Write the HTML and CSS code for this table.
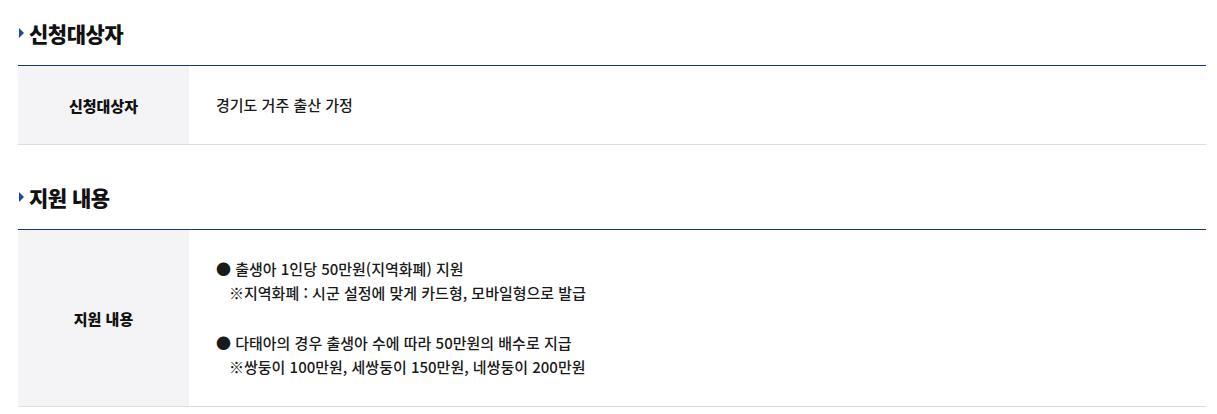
FILE: index.html
```html
<!DOCTYPE html>
<html lang="ko">
<head>
<meta charset="utf-8">
<link rel="stylesheet" href="styles.css">
</head>
<body>
<div class="page">
  <section class="sec">
    <h3 class="sec-title"><span class="tri"></span>신청대상자</h3>
    <div class="row">
      <div class="label">신청대상자</div>
      <div class="value"><p>경기도 거주 출산 가정</p></div>
    </div>
  </section>
  <section class="sec sec-2">
    <h3 class="sec-title"><span class="tri"></span>지원 내용</h3>
    <div class="row">
      <div class="label">지원 내용</div>
      <div class="value">
        <p>● 출생아 1인당 50만원(지역화폐) 지원</p>
        <p class="note">※지역화폐 : 시군 설정에 맞게 카드형, 모바일형으로 발급</p>
        <p class="blank"></p>
        <p>● 다태아의 경우 출생아 수에 따라 50만원의 배수로 지급</p>
        <p class="note">※쌍둥이 100만원, 세쌍둥이 150만원, 네쌍둥이 200만원</p>
      </div>
    </div>
  </section>
</div>
</body>
</html>
```

FILE: styles.css
```css
* { box-sizing: border-box; }
html, body { margin: 0; padding: 0; background: #fff; }
body {
  font-family: "Noto Sans CJK KR", "Noto Sans", sans-serif;
  color: #222;
}
.page {
  padding: 21px 11px 0 18px;
}
.sec-title {
  margin: 0 0 20px;
  display: flex;
  align-items: center;
  gap: 5px;
  height: 24px;
  font-size: 21px;
  line-height: 24px;
  font-weight: 900;
  color: #111;
  letter-spacing: -0.5px;
}
.tri {
  width: 0;
  height: 0;
  border-top: 5px solid transparent;
  border-bottom: 5px solid transparent;
  border-left: 5px solid #1c4a96;
  margin-left: 1px;
}
.sec-2 { margin-top: 40px; }
.row {
  display: flex;
  border-top: 1px solid #1b3a66;
  border-bottom: 1px solid #dedede;
}
.label {
  width: 171px;
  flex: none;
  background: #f4f4f6;
  display: flex;
  align-items: center;
  justify-content: center;
  font-size: 15px;
  font-weight: 900;
  color: #111;
}
.value {
  flex: 1;
  padding: 27px 27px;
  font-size: 15px;
  line-height: 24px;
  font-weight: 500;
  color: #1a1a1a;
}
.value p { margin: 0; }
.note { padding-left: 13px; }
.blank { height: 26px; }
```
